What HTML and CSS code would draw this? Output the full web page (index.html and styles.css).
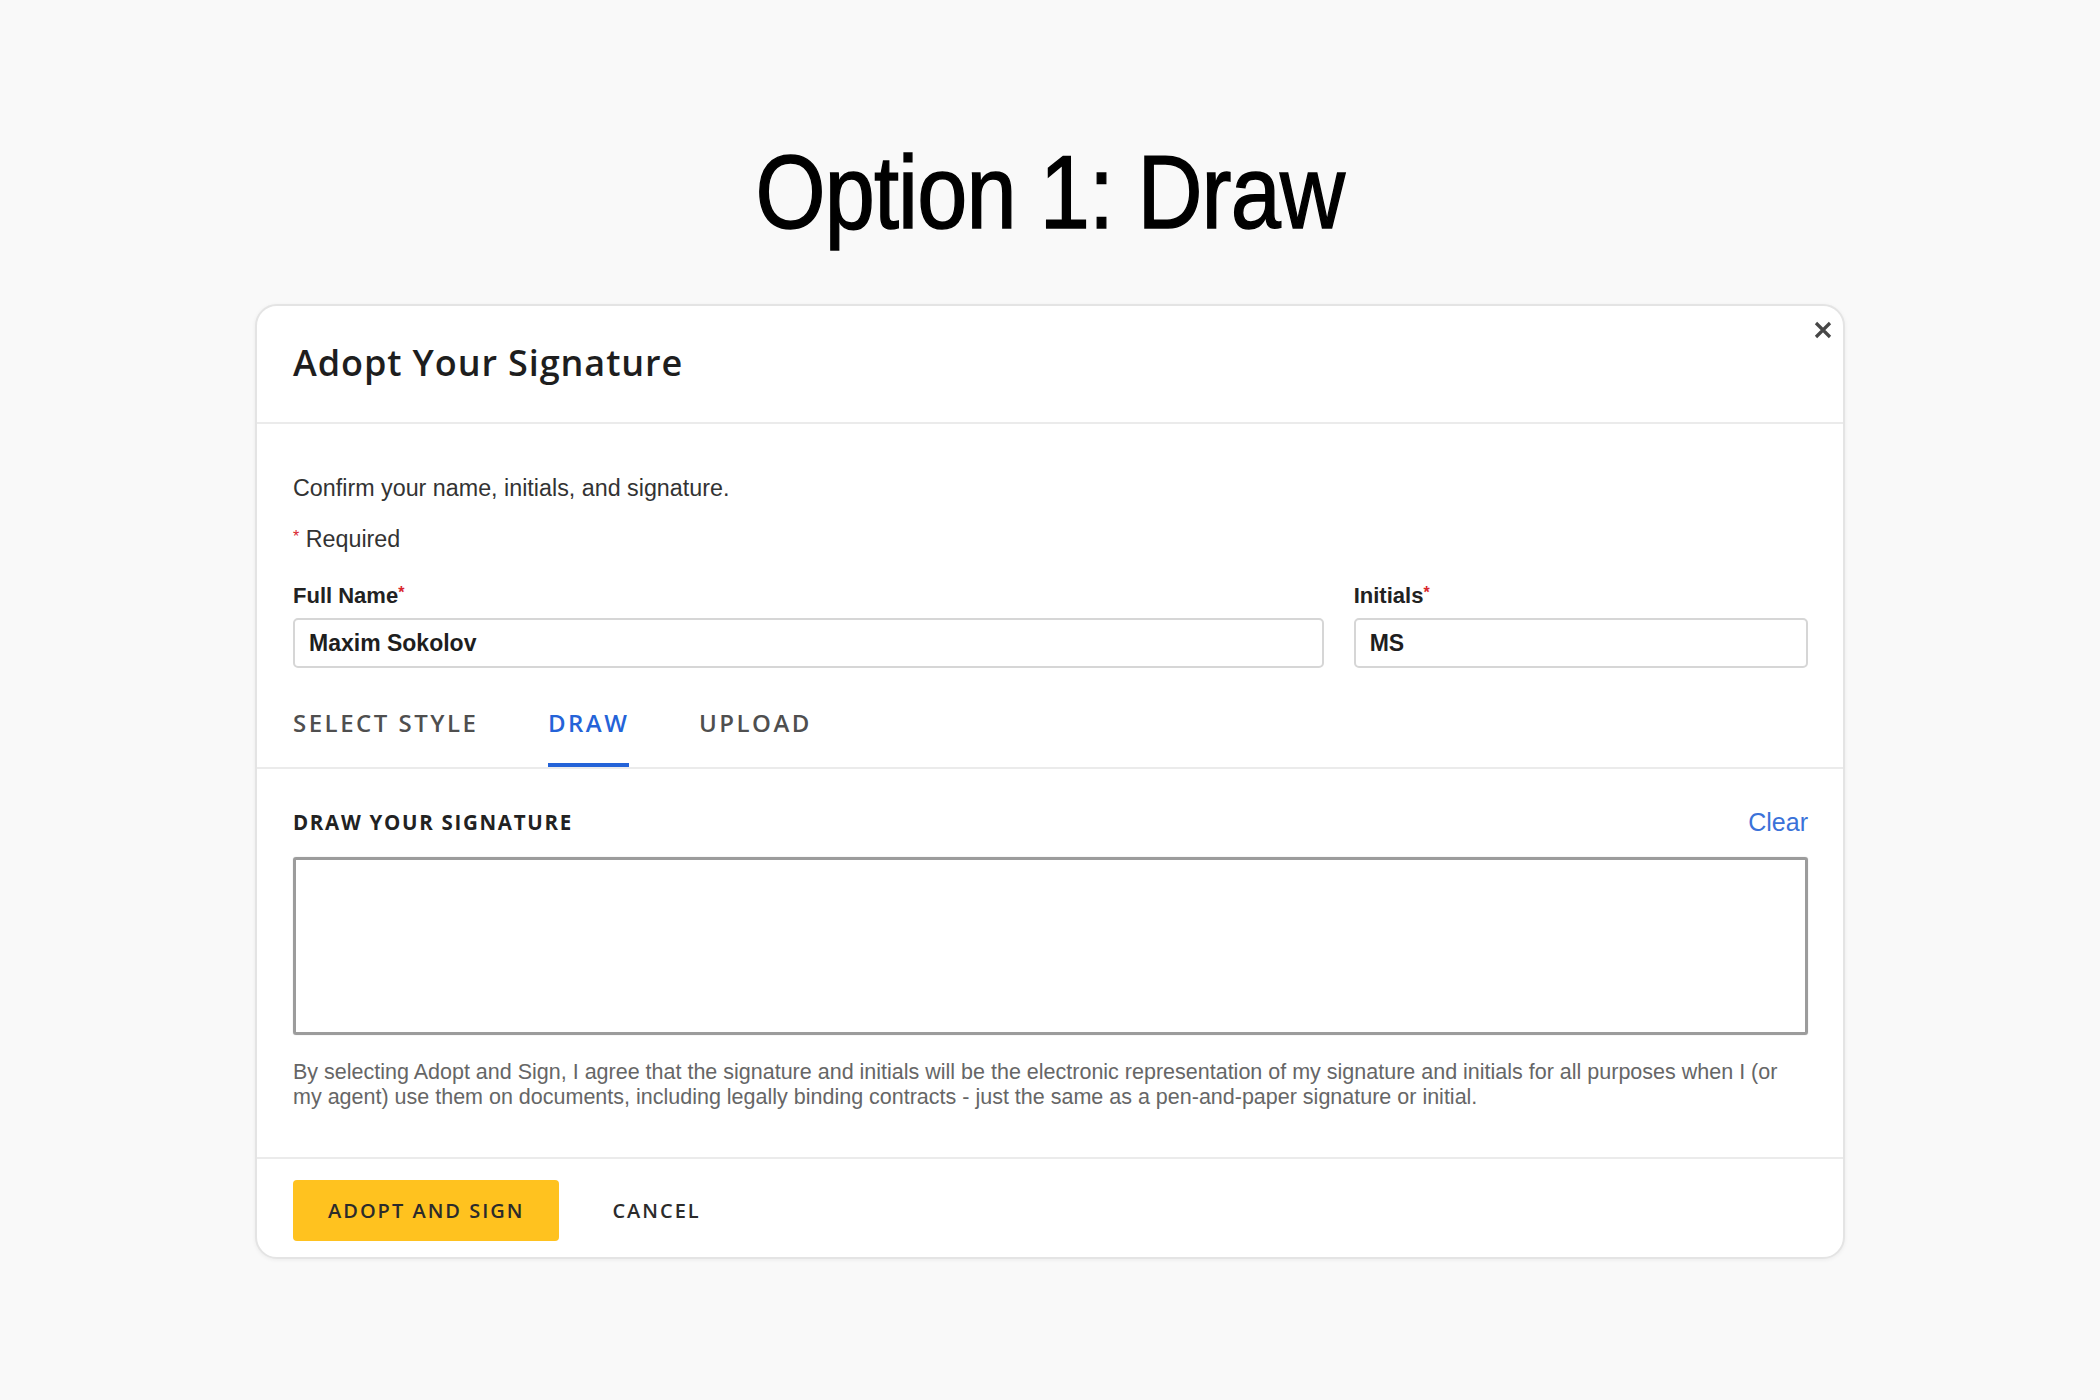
FILE: index.html
```html
<!DOCTYPE html>
<html lang="en">
<head>
    <meta charset="UTF-8">
    <meta name="viewport" content="width=device-width, initial-scale=1.0">
    <title>Option 1: Draw</title>
    <link rel="stylesheet" href="styles.css">
</head>
<body>
    <div class="page">
        <div class="title-wrap">
            <h1 class="page-title">Option 1: Draw</h1>
        </div>

        <div class="modal">
            <div class="modal-header">
                <h2>Adopt Your Signature</h2>
                <button class="close-btn" aria-label="Close">
                    <svg width="18" height="18" viewBox="0 0 18 18">
                        <path d="M2 2 L16 16 M16 2 L2 16" stroke="#474747" stroke-width="3.2" fill="none"/>
                    </svg>
                </button>
            </div>

            <div class="modal-body">
                <p class="intro">Confirm your name, initials, and signature.</p>
                <p class="required"><span class="req">*</span> Required</p>

                <div class="fields">
                    <div class="field">
                        <label for="full-name">Full Name<span class="req">*</span></label>
                        <input type="text" id="full-name" value="Maxim Sokolov">
                    </div>
                    <div class="field">
                        <label for="initials">Initials<span class="req">*</span></label>
                        <input type="text" id="initials" value="MS">
                    </div>
                </div>
            </div>

            <div class="tabs">
                <div class="tab">SELECT STYLE</div>
                <div class="tab active">DRAW</div>
                <div class="tab">UPLOAD</div>
            </div>

            <div class="draw-section">
                <div class="draw-head">
                    <span class="draw-title">DRAW YOUR SIGNATURE</span>
                    <a class="clear-link" href="#">Clear</a>
                </div>
                <div class="sig-pad"></div>
                <p class="legal">By selecting Adopt and Sign, I agree that the signature and initials will be the electronic representation of my signature and initials for all purposes when I (or my agent) use them on documents, including legally binding contracts - just the same as a pen-and-paper signature or initial.</p>
            </div>

            <div class="modal-footer">
                <button class="btn-adopt">ADOPT AND SIGN</button>
                <button class="btn-cancel">CANCEL</button>
            </div>
        </div>
    </div>
</body>
</html>
```

FILE: styles.css
```css
body {
    margin: 0;
    background-color: #f9f9f9;
    font-family: "Liberation Sans", Arial, sans-serif;
    color: #333;
}
.page {
    padding-top: 140px;
    padding-bottom: 60px;
}
.title-wrap {
    text-align: center;
    margin-bottom: 60px;
}
/* condensed grotesque look: squeeze the regular face */
.page-title {
    display: inline-block;
    margin: 0;
    font-size: 104px;
    line-height: 104px;
    font-weight: normal;
    letter-spacing: -1px;
    color: #000;
    -webkit-text-stroke: 1.5px #000;
    transform: scaleX(0.866);
}
.modal {
    position: relative;
    width: 1586px;
    margin: 0 auto;
    background-color: #fff;
    border: 2px solid #e4e4e4;
    border-radius: 22px;
    box-shadow: 0 1px 4px rgba(0, 0, 0, 0.06);
}
.modal-header {
    height: 118px;
    padding: 0 35px 4px 36px;
    box-sizing: border-box;
    display: flex;
    align-items: center;
    border-bottom: 2px solid #ebebeb;
}
.modal-header h2 {
    margin: 0;
    font-family: "Open Sans", sans-serif;
    font-size: 36px;
    font-weight: 600;
    letter-spacing: 0.9px;
    color: #1e1e1e;
}
.close-btn {
    position: absolute;
    top: 15px;
    right: 11px;
    padding: 0;
    border: none;
    background: none;
    width: 18px;
    height: 18px;
    cursor: pointer;
}
.close-btn svg {
    display: block;
}
.modal-body {
    padding: 50px 35px 0 36px;
}
.intro,
.required {
    margin: 0;
    font-size: 23.3px;
    line-height: 28px;
    color: #333;
}
.required {
    margin-top: 21px;
}
.req {
    color: #d9262c;
    font-size: 16px;
    vertical-align: 5px;
}
.fields {
    display: grid;
    grid-template-columns: 1030fr 454fr;
    gap: 30px;
    margin-top: 26px;
}
.field label {
    display: block;
    margin-bottom: 8px;
    font-size: 22px;
    line-height: 28px;
    font-weight: bold;
    color: #222;
}
.field input {
    display: block;
    width: 100%;
    box-sizing: border-box;
    height: 50px;
    padding: 0 14px;
    border: 2px solid #d6d6d6;
    border-radius: 5px;
    font-family: "Liberation Sans", Arial, sans-serif;
    font-size: 23px;
    font-weight: bold;
    color: #1e1e1e;
    background-color: #fff;
    outline: none;
}
.tabs {
    display: flex;
    gap: 72px;
    margin-top: 41px;
    padding: 0 35px 0 36px;
    border-bottom: 2px solid #ebebeb;
}
.tab {
    padding-bottom: 26px;
    border-bottom: 4px solid transparent;
    margin-right: -2.5px;
    font-family: "Open Sans", sans-serif;
    font-size: 24px;
    line-height: 28px;
    font-weight: 600;
    letter-spacing: 2.5px;
    color: #4f4f4f;
}
.tab.active {
    color: #2463d8;
    border-bottom-color: #2463d8;
}
.draw-section {
    padding: 39px 35px 47px 36px;
}
.draw-head {
    display: flex;
    justify-content: space-between;
    align-items: center;
    margin-bottom: 21px;
}
.draw-title {
    font-family: "Open Sans", sans-serif;
    font-size: 20.5px;
    line-height: 28px;
    font-weight: 700;
    letter-spacing: 1.7px;
    color: #222;
}
.clear-link {
    font-size: 25px;
    line-height: 28px;
    color: #3a72d9;
    text-decoration: none;
}
.sig-pad {
    height: 172px;
    border: 3px solid #9c9c9c;
    border-radius: 3px;
    box-shadow: 0 0 1px rgba(0, 0, 0, 0.3);
}
.legal {
    max-width: 1500px;
    margin: 25px 0 0;
    font-size: 21.5px;
    line-height: 25px;
    color: #666;
}
.modal-footer {
    display: flex;
    align-items: center;
    gap: 53px;
    padding: 21px 35px 16px 36px;
    border-top: 2px solid #ebebeb;
}
.btn-adopt {
    height: 61px;
    padding: 0 35px;
    border: none;
    border-radius: 4px;
    background-color: #ffc21f;
    font-family: "Open Sans", sans-serif;
    font-size: 20px;
    font-weight: 600;
    letter-spacing: 2px;
    color: #2b2b2b;
    cursor: pointer;
}
.btn-cancel {
    padding: 0;
    border: none;
    background: none;
    font-family: "Open Sans", sans-serif;
    font-size: 20px;
    font-weight: 600;
    letter-spacing: 2px;
    color: #2b2b2b;
    cursor: pointer;
}
```
